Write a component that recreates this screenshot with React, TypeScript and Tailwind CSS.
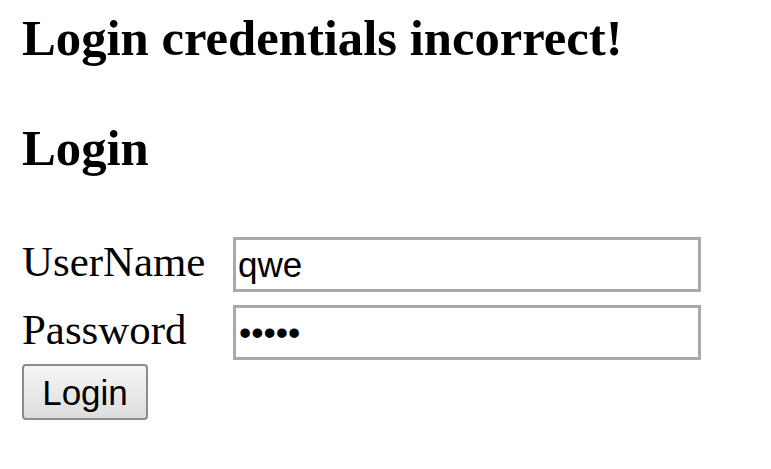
import React from "react";

export default function App() {
  return (
    <div className="min-h-[469px] w-[771px] bg-white pl-[22px] text-black">
      <h1 className="pt-[13px] font-['Liberation_Serif',serif] text-[50.7px] font-bold leading-[50px] whitespace-nowrap">
        Login credentials incorrect!
      </h1>
      <h2 className="mt-[60px] font-['Liberation_Serif',serif] text-[50.7px] font-bold leading-[50px]">
        Login
      </h2>
      <form className="mt-[64px] flex flex-col" onSubmit={(e) => e.preventDefault()}>
        <div className="flex items-start">
          <label className="w-[211px] shrink-0 font-['Liberation_Serif',serif] text-[42.9px] leading-[50px]">
            UserName
          </label>
          <input
            type="text"
            defaultValue="qwe"
            className="h-[55px] w-[468px] border-[3px] border-[#a9a9a9] bg-white px-[2px] font-['Liberation_Sans',Arial,sans-serif] text-[35px] text-black outline-none"
          />
        </div>
        <div className="mt-[13px] flex items-start">
          <label className="w-[211px] shrink-0 font-['Liberation_Serif',serif] text-[42.9px] leading-[50px]">
            Password
          </label>
          <input
            type="password"
            defaultValue="qwert"
            className="h-[55px] w-[468px] border-[3px] border-[#a9a9a9] bg-white px-[3px] font-['Liberation_Sans',Arial,sans-serif] text-[35px] text-black outline-none"
          />
        </div>
        <div className="mt-[4px]">
          <button
            type="submit"
            className="h-[56px] w-[126px] rounded-[4px] border-[2px] border-[#8c8c8c] bg-gradient-to-b from-[#f6f6f6] to-[#dddddd] font-['Liberation_Sans',Arial,sans-serif] text-[35px] leading-none text-black"
          >
            Login
          </button>
        </div>
      </form>
    </div>
  );
}
